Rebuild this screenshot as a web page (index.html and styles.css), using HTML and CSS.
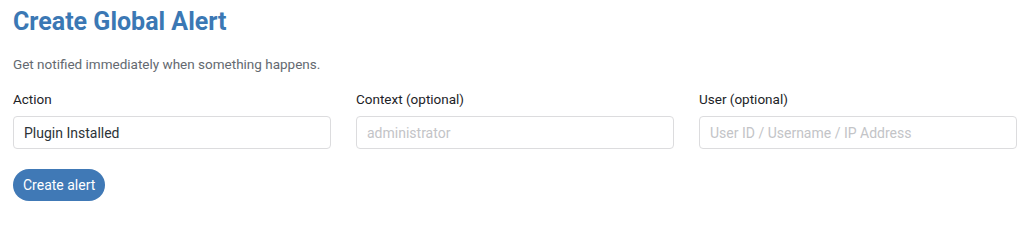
FILE: index.html
```html
<!DOCTYPE html>
<html lang="en">
<head>
<meta charset="utf-8">
<title>Create Global Alert</title>
<link rel="stylesheet" href="styles.css">
</head>
<body>
<div class="page">
  <h1 class="title">Create Global Alert</h1>
  <p class="subtitle">Get notified immediately when something happens.</p>
  <form class="form">
    <div class="fields">
      <label class="field">
        <span class="label">Action</span>
        <input class="input" type="text" value="Plugin Installed">
      </label>
      <label class="field">
        <span class="label">Context (optional)</span>
        <input class="input" type="text" placeholder="administrator">
      </label>
      <label class="field">
        <span class="label">User (optional)</span>
        <input class="input" type="text" placeholder="User ID / Username / IP Address">
      </label>
    </div>
    <button class="btn" type="button">Create alert</button>
  </form>
</div>
</body>
</html>
```

FILE: styles.css
```css
* { box-sizing: border-box; }
html, body { margin: 0; padding: 0; background: #ffffff; }
body {
  font-family: Roboto, "Noto Sans", "Liberation Sans", sans-serif;
  color: #1d2327;
}
.page {
  padding: 6px 7px 0 13px;
}
.title {
  margin: 0;
  font-size: 25px;
  line-height: 32px;
  font-weight: 700;
  color: #3b78b4;
}
.subtitle {
  margin: 17px 0 0;
  font-size: 13.5px;
  line-height: 18px;
  color: #646970;
}
.form { margin-top: 16px; }
.fields {
  display: grid;
  grid-template-columns: 1fr 1fr 1fr;
  column-gap: 25px;
}
.field { display: flex; flex-direction: column; }
.label {
  font-size: 13.5px;
  line-height: 18px;
  color: #1d2327;
  margin-top: 1px;
  margin-bottom: 8px;
}
.input {
  height: 33px;
  width: 100%;
  border: 1px solid #dcdcde;
  border-radius: 4px;
  padding: 0 10px;
  font: inherit;
  font-size: 14px;
  color: #2c3338;
  background: #fff;
  outline: none;
}
.input::placeholder { color: #c3c4c7; }
.btn {
  margin-top: 20px;
  height: 32px;
  padding: 0 10px;
  border: none;
  border-radius: 16px;
  background: #4079b6;
  color: #ffffff;
  font: inherit;
  font-size: 14px;
  cursor: pointer;
}
```
